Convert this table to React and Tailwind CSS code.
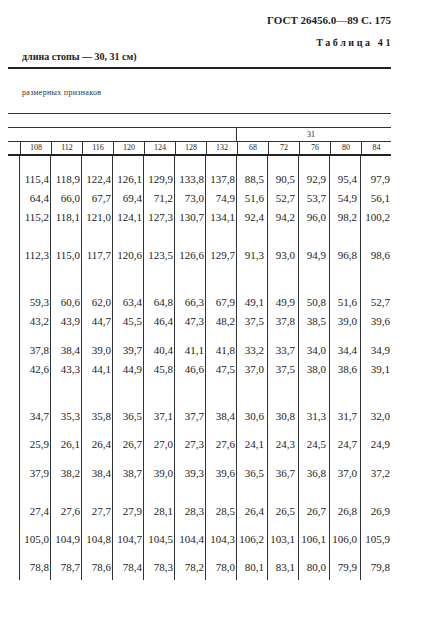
import React from "react";

const heads = ["108", "112", "116", "120", "124", "128", "132", "68", "72", "76", "80", "84"];

const rows = [
  { mt: "mt-[14px]", v: ["115,4", "118,9", "122,4", "126,1", "129,9", "133,8", "137,8", "88,5", "90,5", "92,9", "95,4", "97,9"] },
  { mt: "mt-[1px]", v: ["64,4", "66,0", "67,7", "69,4", "71,2", "73,0", "74,9", "51,6", "52,7", "53,7", "54,9", "56,1"] },
  { mt: "mt-[1px]", v: ["115,2", "118,1", "121,0", "124,1", "127,3", "130,7", "134,1", "92,4", "94,2", "96,0", "98,2", "100,2"] },
  { mt: "mt-[20px]", v: ["112,3", "115,0", "117,7", "120,6", "123,5", "126,6", "129,7", "91,3", "93,0", "94,9", "96,8", "98,6"] },
  { mt: "mt-[29px]", v: ["59,3", "60,6", "62,0", "63,4", "64,8", "66,3", "67,9", "49,1", "49,9", "50,8", "51,6", "52,7"] },
  { mt: "mt-[1px]", v: ["43,2", "43,9", "44,7", "45,5", "46,4", "47,3", "48,2", "37,5", "37,8", "38,5", "39,0", "39,6"] },
  { mt: "mt-[11px]", v: ["37,8", "38,4", "39,0", "39,7", "40,4", "41,1", "41,8", "33,2", "33,7", "34,0", "34,4", "34,9"] },
  { mt: "mt-[1px]", v: ["42,6", "43,3", "44,1", "44,9", "45,8", "46,6", "47,5", "37,0", "37,5", "38,0", "38,6", "39,1"] },
  { mt: "mt-[29px]", v: ["34,7", "35,3", "35,8", "36,5", "37,1", "37,7", "38,4", "30,6", "30,8", "31,3", "31,7", "32,0"] },
  { mt: "mt-[10px]", v: ["25,9", "26,1", "26,4", "26,7", "27,0", "27,3", "27,6", "24,1", "24,3", "24,5", "24,7", "24,9"] },
  { mt: "mt-[11px]", v: ["37,9", "38,2", "38,4", "38,7", "39,0", "39,3", "39,6", "36,5", "36,7", "36,8", "37,0", "37,2"] },
  { mt: "mt-[20px]", v: ["27,4", "27,6", "27,7", "27,9", "28,1", "28,3", "28,5", "26,4", "26,5", "26,7", "26,8", "26,9"] },
  { mt: "mt-[10px]", v: ["105,0", "104,9", "104,8", "104,7", "104,5", "104,4", "104,3", "106,2", "103,1", "106,1", "106,0", "105,9"] },
  { mt: "mt-[10px]", v: ["78,8", "78,7", "78,6", "78,4", "78,3", "78,2", "78,0", "80,1", "83,1", "80,0", "79,9", "79,8"] },
];

const grid = "grid grid-cols-[12px_repeat(11,31px)_30px]";

export default function App() {
  return (
    <div
      className="w-[424px] h-[632px] bg-white text-[#1c1c1c] overflow-hidden"
      style={{ fontFamily: "'Liberation Serif', 'DejaVu Serif', serif" }}
    >
      <div className="ml-[8px] w-[383px] pt-[13px] flex flex-col">
        <p className="text-right text-[11px] font-bold leading-[14px]">ГОСТ 26456.0—89 С. 175</p>
        <p className="mt-[9px] text-right text-[10px] font-bold leading-[14px] tracking-[2.6px] -mr-[2px]">Таблица 41</p>
        <p className="pl-[14px] text-[10px] font-bold leading-[14px]">длина стопы — 30, 31 см)</p>
        <div className="mt-[3px] h-[2px] bg-[#222]" />
        <p className="mt-[18px] pl-[14px] text-[8px] leading-[11px] tracking-[0.3px] text-[#333]">размерных признаков</p>
        <div className="mt-[15px] h-px bg-[#333]" />
        <div className="mt-[13px] h-px bg-[#333]" />
        <div className="flex h-[14px] border-b border-[#333]">
          <div className="w-[229px] border-r border-[#333]" />
          <div className="flex-1 flex items-center justify-center text-[8px] leading-none pr-[6px]">31</div>
        </div>
        <div className={`${grid} h-[14px] border-b-2 border-[#222]`}>
          <div />
          {heads.map((h) => (
            <div key={h} className="border-l border-[#333] flex items-center justify-center text-[8px] leading-none">
              {h}
            </div>
          ))}
        </div>
        <div className={`${grid} h-[424px]`}>
          <div className="border-r border-[#333]" />
          {heads.map((h, ci) => (
            <div
              key={h}
              className={
                ci < 11
                  ? ci < 7
                    ? "flex flex-col border-r border-[#333] pr-[1px]"
                    : "flex flex-col border-r border-[#333] pr-[3px]"
                  : "flex flex-col pr-[1px]"
              }
            >
              {rows.map((r, ri) => (
                <div key={ri} className={`${r.mt} h-[18px] flex items-center justify-end text-[11px] leading-none`}>
                  {r.v[ci]}
                </div>
              ))}
            </div>
          ))}
        </div>
      </div>
    </div>
  );
}
